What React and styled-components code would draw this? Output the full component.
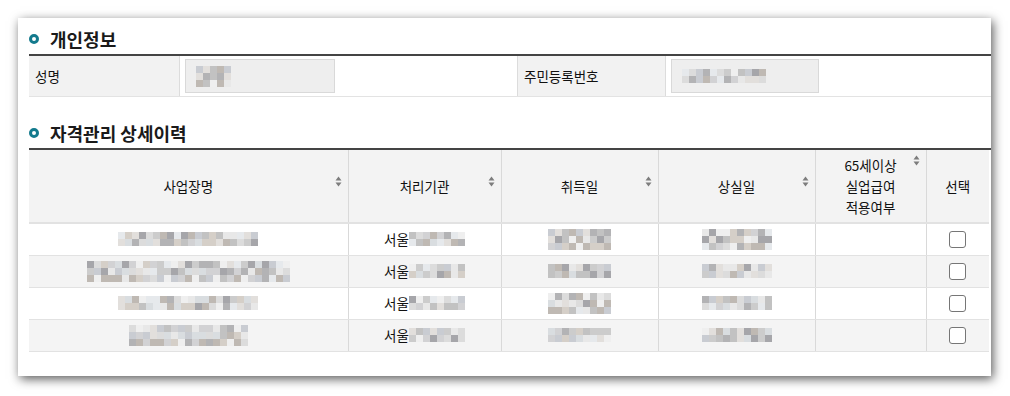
import styled, { createGlobalStyle } from 'styled-components';

const GlobalStyle = createGlobalStyle`
	* {
		box-sizing: border-box;
	}
	body {
		margin: 0;
		background: #fff;
		font-family: 'Noto Sans CJK KR', 'Noto Sans', sans-serif;
		color: #111;
	}
`;

const Page = styled.div`
	padding: 18px 19px 20px 18px;
`;

const Card = styled.div`
	width: 973px;
	background: #fff;
	padding: 9px 0 24px 11px;
	box-shadow: 2px 3px 10px rgba(0, 0, 0, 0.65);
`;

const SectionHeader = styled.div`
	display: flex;
	align-items: center;
	height: 29px;
	padding-bottom: 3px;
	border-bottom: 2px solid #444;
	margin-top: ${(p) => (p.$first ? '0' : '24px')};
`;

const Bullet = styled.span`
	width: 10px;
	height: 10px;
	border-radius: 50%;
	border: 3px solid #137a8d;
	margin-right: 11px;
`;

const Title = styled.h2`
	margin: 0;
	font-size: 18px;
	font-weight: 700;
	line-height: 24px;
	color: #1a1a1a;
`;

const InfoRow = styled.div`
	display: grid;
	grid-template-columns: 151px 337px 149px 1fr;
	height: 41px;
	border-bottom: 1px solid #e3e3e3;
`;

const Label = styled.div`
	display: flex;
	align-items: center;
	padding-left: 6px;
	background: #f2f2f2;
	font-size: 13.5px;
	color: #111;
	border-right: 1px solid #dcdcdc;
	border-left: ${(p) => (p.$divider ? '1px solid #dcdcdc' : 'none')};
`;

const Value = styled.div`
	padding: 3px 0 0 5px;
`;

const InputBox = styled.div`
	width: ${(p) => p.$width}px;
	height: 34px;
	background: #eeeeee;
	border: 1px solid #d9d9d9;
	display: flex;
	align-items: center;
	padding-left: 10px;
`;

const Table = styled.table`
	width: 960px;
	border-collapse: collapse;
	table-layout: fixed;
	font-size: 13.5px;
`;

const Th = styled.th`
	height: 73px;
	background: #f3f3f3;
	font-weight: 400;
	color: #111;
	line-height: 21px;
	vertical-align: middle;
	padding: 0;
	border-right: 1px solid #d9d9d9;
	border-bottom: 2px solid #e2e2e2;
	&:last-child {
		border-right: none;
	}
`;

const HeadLabel = styled.div`
	position: relative;
	text-align: center;
`;

const SortIcon = styled.svg`
	position: absolute;
	right: 6px;
	top: 0;
	width: 7px;
	height: 11px;
`;

const Tr = styled.tr`
	background: ${(p) => (p.$alt ? '#f4f4f4' : '#fff')};
`;

const Td = styled.td`
	height: 32px;
	padding: 0;
	text-align: center;
	vertical-align: middle;
	color: #111;
	border-right: 1px solid #d9d9d9;
	border-bottom: 1px solid #e2e2e2;
	&:last-child {
		border-right: none;
	}
`;

const CellInner = styled.div`
	display: flex;
	align-items: center;
	justify-content: center;
`;

const MosaicGrid = styled.div`
	display: inline-grid;
	grid-template-columns: repeat(${(p) => p.$cols}, 7px);
	grid-auto-rows: 7px;
	filter: blur(0.3px);
`;

const Block = styled.span`
	display: block;
`;

const CheckBox = styled.input`
	appearance: none;
	width: 17px;
	height: 17px;
	margin: 0;
	background: #fff;
	border: 1px solid #767676;
	border-radius: 3px;
	display: block;
`;

const palette = [
	'#e8e8e8', '#dcdcdc', '#d2d2d4', '#c9ccd2', '#d5cfc8', '#c2c2c2',
	'#b3b3b5', '#e6e9ec', '#efefef', '#bfb9b3', '#a6a6aa', '#d9dde0',
	'#cccccc', '#e2dfdc',
];

const Mosaic = ({ cols, rows, seed }) => {
	let s = seed * 9301 + 49297;
	const cells = [];
	for (let i = 0; i < cols * rows; i++) {
		s = (s * 9301 + 49297) % 233280;
		const r = s / 233280;
		const row = Math.floor(i / cols);
		const idx = Math.floor(r * palette.length);
		const light = row === rows - 1 && rows > 2 ? Math.min(idx, 9) : idx;
		cells.push(<Block key={i} style={{ background: palette[light] }} />);
	}
	return <MosaicGrid $cols={cols}>{cells}</MosaicGrid>;
};

const Sort = () => (
	<SortIcon viewBox='0 0 7 11'>
		<path d='M0.5 4.5 L3.5 0.5 L6.5 4.5 Z' fill='#7d7d7d' />
		<path d='M0.5 6.5 L3.5 10.5 L6.5 6.5 Z' fill='#7d7d7d' />
	</SortIcon>
);

const columns = [
	{ key: 'name', width: 319, label: ['사업장명'], sort: true },
	{ key: 'org', width: 153, label: ['처리기관'], sort: true },
	{ key: 'get', width: 157, label: ['취득일'], sort: true },
	{ key: 'lost', width: 157, label: ['상실일'], sort: true },
	{ key: 'over65', width: 111, label: ['65세이상', '실업급여', '적용여부'], sort: true },
	{ key: 'select', width: 63, label: ['선택'], sort: false },
];

const rows = [
	{ name: [20, 2], org: [8, 2], get: [9, 3], lost: [10, 3] },
	{ name: [29, 3], org: [8, 2], get: [9, 2], lost: [10, 2] },
	{ name: [20, 2], org: [8, 2], get: [9, 3], lost: [10, 2] },
	{ name: [17, 3], org: [8, 2], get: [9, 2], lost: [10, 2] },
];

const App = () => {
	return (
		<>
			<GlobalStyle />
			<Page>
				<Card>
					<SectionHeader $first>
						<Bullet />
						<Title>개인정보</Title>
					</SectionHeader>
					<InfoRow>
						<Label>성명</Label>
						<Value>
							<InputBox $width={150}>
								<Mosaic cols={5} rows={3} seed={3} />
							</InputBox>
						</Value>
						<Label $divider>주민등록번호</Label>
						<Value>
							<InputBox $width={148}>
								<Mosaic cols={12} rows={2} seed={7} />
							</InputBox>
						</Value>
					</InfoRow>

					<SectionHeader>
						<Bullet />
						<Title>자격관리 상세이력</Title>
					</SectionHeader>
					<Table>
						<colgroup>
							{columns.map((c) => (
								<col key={c.key} style={{ width: c.width }} />
							))}
						</colgroup>
						<thead>
							<tr>
								{columns.map((c) => (
									<Th key={c.key}>
										<HeadLabel>
											{c.label.map((line) => (
												<div key={line}>{line}</div>
											))}
											{c.sort && <Sort />}
										</HeadLabel>
									</Th>
								))}
							</tr>
						</thead>
						<tbody>
							{rows.map((r, i) => (
								<Tr key={i} $alt={i % 2 === 1}>
									<Td>
										<CellInner>
											<Mosaic cols={r.name[0]} rows={r.name[1]} seed={i * 11 + 1} />
										</CellInner>
									</Td>
									<Td>
										<CellInner>
											서울
											<Mosaic cols={r.org[0]} rows={r.org[1]} seed={i * 11 + 2} />
										</CellInner>
									</Td>
									<Td>
										<CellInner>
											<Mosaic cols={r.get[0]} rows={r.get[1]} seed={i * 11 + 3} />
										</CellInner>
									</Td>
									<Td>
										<CellInner>
											<Mosaic cols={r.lost[0]} rows={r.lost[1]} seed={i * 11 + 4} />
										</CellInner>
									</Td>
									<Td />
									<Td>
										<CellInner>
											<CheckBox type='checkbox' aria-label='선택' />
										</CellInner>
									</Td>
								</Tr>
							))}
						</tbody>
					</Table>
				</Card>
			</Page>
		</>
	);
};

export default App;
